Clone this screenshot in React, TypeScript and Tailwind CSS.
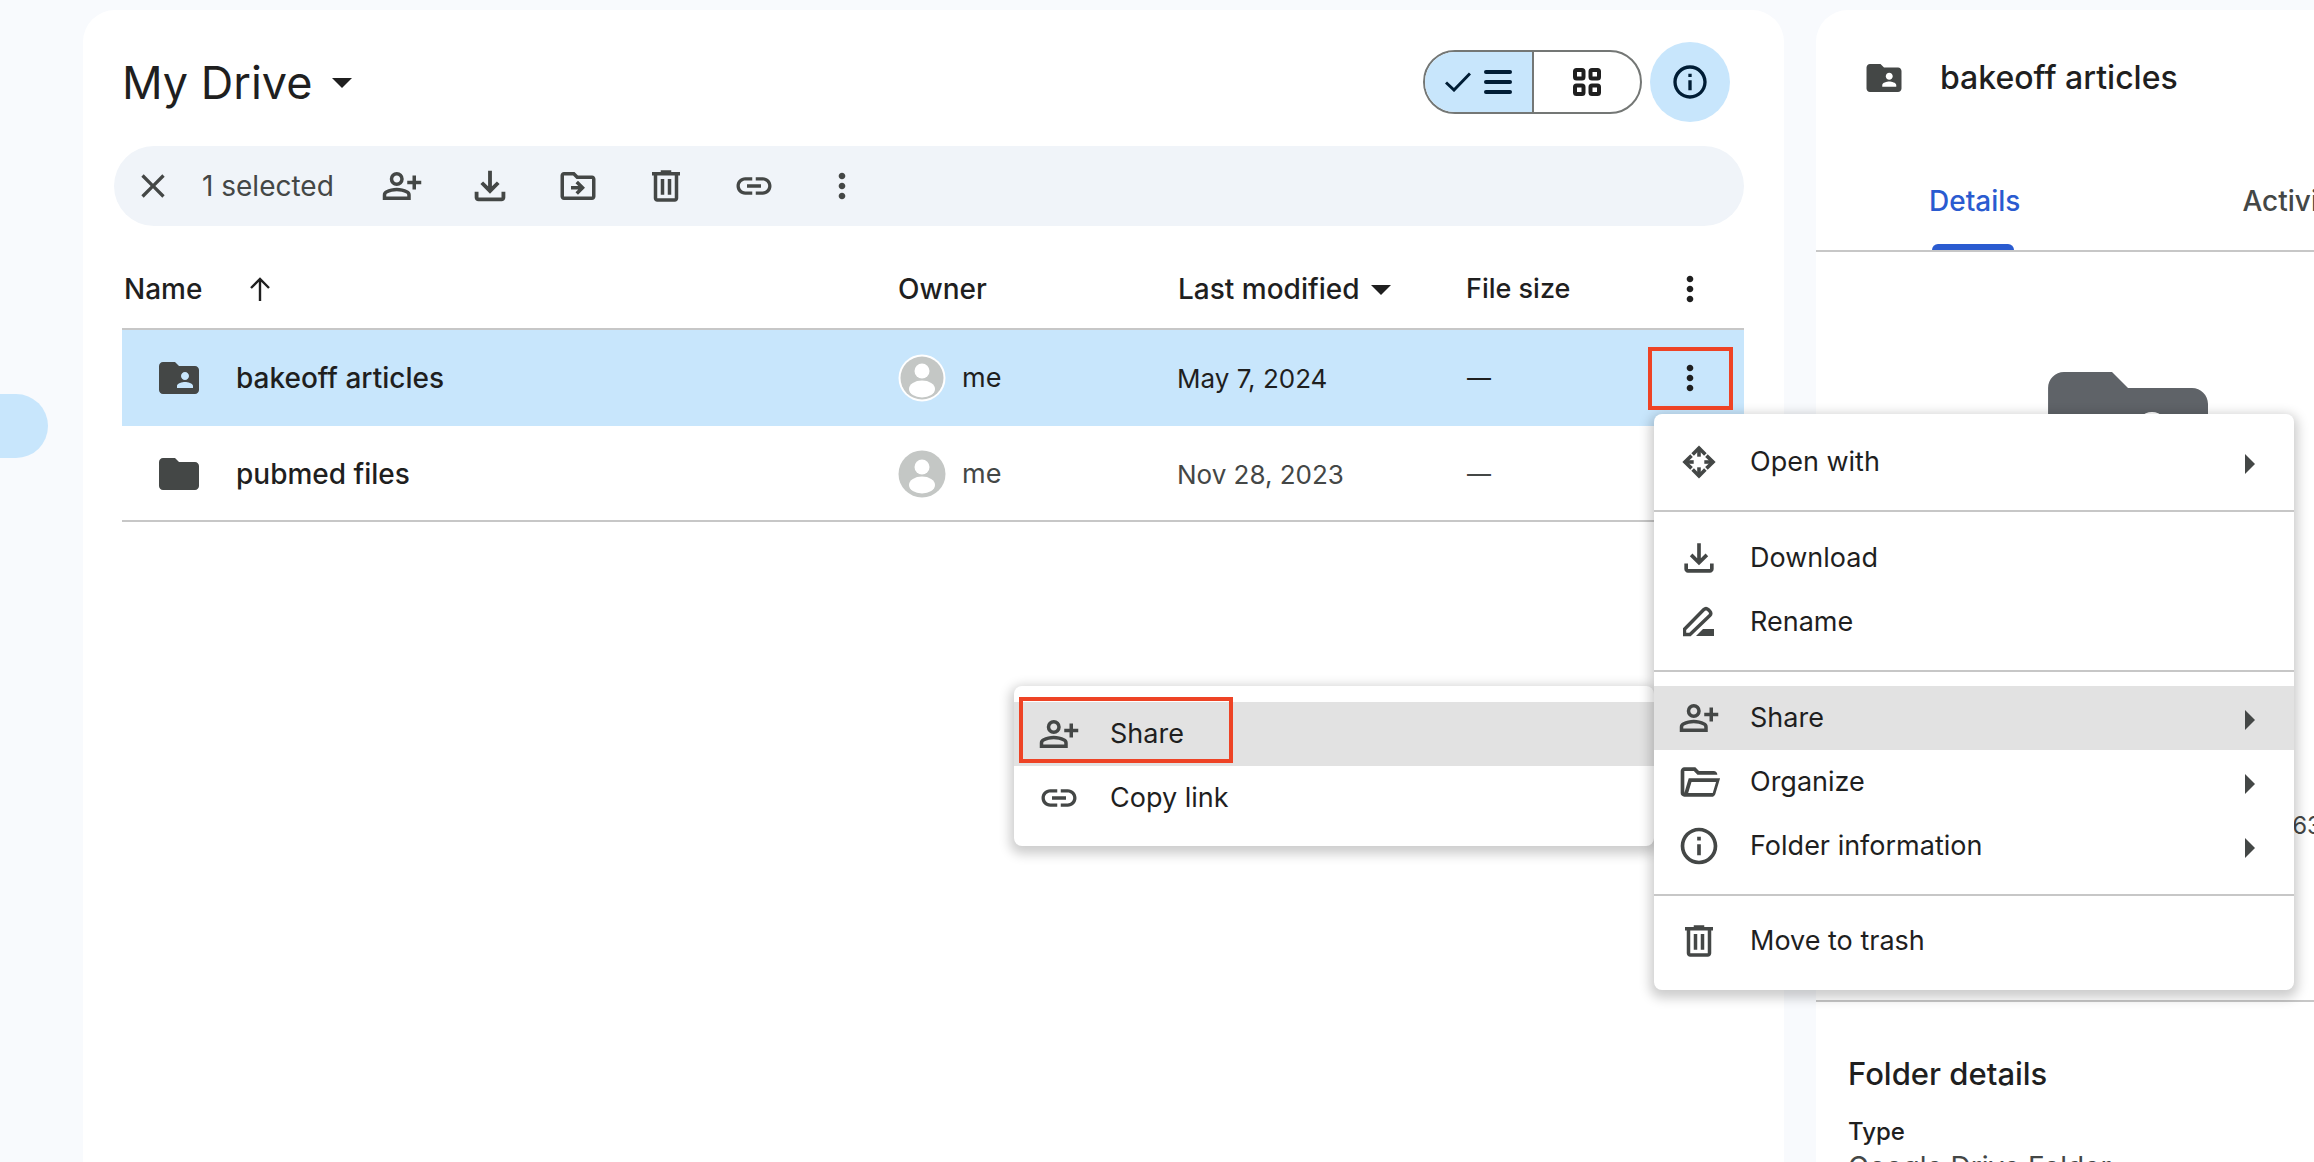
import type { ReactNode } from "react";
import { MdArrowDropDown, MdClose, MdFolder, MdFolderShared, MdInfoOutline, MdLink, MdMoreVert, MdOutlineDriveFileMove, MdOutlineFileDownload } from "react-icons/md";

const columns = "grid grid-cols-[776px_279px_289px_278px] items-center";

function Symbol({ d, size = 42 }: { d: string; size?: number }) {
  return (
    <svg viewBox="0 0 24 24" width={size} height={size} fill="currentColor" fillRule="evenodd">
      <path d={d} />
    </svg>
  );
}

const PersonAdd = () => (
  <Symbol d="M18 14v-3h-3V9h3V6h2v3h3v2h-3v3h-2Zm-9-2q-1.65 0-2.825-1.175T5 8q0-1.65 1.175-2.825T9 4q1.65 0 2.825 1.175T13 8q0 1.65-1.175 2.825T9 12Zm-8 8v-2.8q0-.85.438-1.562T2.6 14.55q1.55-.775 3.15-1.162T9 13q1.65 0 3.25.388t3.15 1.162q.725.375 1.163 1.088T17 17.2V20H1Zm2-2h12v-.8q0-.275-.138-.5t-.362-.35q-1.35-.675-2.725-1.012T9 15q-1.4 0-2.775.338T3.5 16.35q-.225.125-.363.35T3 17.2v.8Zm6-8q.825 0 1.413-.588T11 8q0-.825-.588-1.413T9 6q-.825 0-1.413.588T7 8q0 .825.588 1.413T9 10Z" />
);

const Trash = () => (
  <Symbol d="M7 21q-.825 0-1.413-.588T5 19V6H4V4h5V3h6v1h5v2h-1v13q0 .825-.588 1.413T17 21H7ZM17 6H7v13h10V6ZM9 17h2V8H9v9Zm4 0h2V8h-2v9Z" />
);

const FolderOpen = () => (
  <Symbol
    size={44}
    d="M4 20q-.825 0-1.413-.588T2 18V6q0-.825.588-1.413T4 4h6l2 2h8q.825 0 1.413.588T22 8H11.175l-2-2H4v12l2.4-8h17.1l-2.575 8.575q-.2.65-.738 1.037T19.5 20H4Zm2.1-2H19.5l1.8-6H7.9l-1.8 6Z"
  />
);

function OpenWith() {
  return (
    <svg viewBox="0 0 32 32" width={34} height={34} fill="none" stroke="currentColor" strokeWidth={3.4} strokeLinejoin="miter">
      {[0, 90, 180, 270].map((angle) => (
        <g key={angle} transform={`rotate(${angle} 16 16)`}>
          <path d="M16 2.5V11" />
          <path d="M10 9L16 2.8L22 9" />
        </g>
      ))}
    </svg>
  );
}

function RenamePencil() {
  return (
    <svg viewBox="0 0 32 32" width={32} height={32}>
      <path
        d="M1.5 28.5V23.2L20.8 3.6Q23 1.6 25.2 3.6L26.8 5.2Q28.8 7.4 26.8 9.5L7 28.5Z"
        fill="none"
        stroke="currentColor"
        strokeWidth={3.4}
      />
      <path d="M13 30L20 23H31V30Z" fill="currentColor" />
    </svg>
  );
}

function Avatar({ ring }: { ring?: boolean }) {
  return (
    <svg viewBox="0 0 48 48" className="h-[48px] w-[48px]">
      <circle cx="24" cy="24" r="23.5" fill={ring ? "#ffffff" : "#c4c7c5"} />
      <circle cx="24" cy="24" r="21.5" fill="#c4c7c5" />
      <circle cx="24" cy="17" r="7.5" fill="#ffffff" />
      <ellipse cx="24" cy="35" rx="13" ry="8.5" fill="#ffffff" />
    </svg>
  );
}

function FileRow({
  name,
  date,
  icon,
  selected,
}: {
  name: string;
  date: string;
  icon: ReactNode;
  selected?: boolean;
}) {
  return (
    <div className={`${columns} ${selected ? "h-[96px] bg-[#c8e6fc] text-[#1f1f1f]" : "h-[94px] pt-[2px] text-[#444746]"}`}>
      <div className="flex items-center">
        <span className="ml-[33px] flex w-[81px] text-[#444746]">{icon}</span>
        <span className="text-[28px] font-medium text-[#1f1f1f]">{name}</span>
      </div>
      <div className="flex items-center gap-[16px]">
        <Avatar ring={selected} />
        <span className="text-[27px]">me</span>
      </div>
      <span className="text-[26px]">{date}</span>
      <div className="flex items-center justify-between pr-[34px]">
        <span className="pl-[1px] text-[24px]">—</span>
        {selected && <MdMoreVert size={40} className="text-[#1f1f1f]" />}
      </div>
    </div>
  );
}

function MenuItem({ icon, label, hover, arrow }: { icon: ReactNode; label: string; hover?: boolean; arrow?: boolean }) {
  return (
    <div className={`flex h-[64px] items-center text-[#1f1f1f] ${hover ? "bg-[#e2e2e2]" : ""}`}>
      <span className="mr-[6px] flex w-[90px] justify-center text-[#444746]">{icon}</span>
      <span className="text-[27px]">{label}</span>
      {arrow && (
        <svg viewBox="0 0 10 20" className="ml-auto mr-[39px] mt-[4px] h-[20px] w-[10px] text-[#444746]">
          <path d="M0 0l10 10L0 20z" fill="currentColor" />
        </svg>
      )}
    </div>
  );
}

const toolbarIcons = [
  <PersonAdd key="share" />,
  <MdOutlineFileDownload key="download" size={46} />,
  <MdOutlineDriveFileMove key="move" size={42} />,
  <Trash key="trash" />,
  <MdLink key="link" size={42} />,
  <MdMoreVert key="more" size={40} />,
];

export default function App() {
  return (
    <div
      className="relative flex h-[1162px] w-[2314px] overflow-hidden bg-[#f8fafd] pt-[10px]"
      style={{ fontFamily: "Inter, 'Noto Sans', sans-serif" }}
    >
      {/* rail: only the active pill shows */}
      <div className="w-[83px] shrink-0 pt-[384px]">
        <div className="h-[64px] w-[48px] rounded-r-[32px] bg-[#c8e6fc]" />
      </div>

      {/* main panel */}
      <main className="h-[1200px] w-[1701px] shrink-0 rounded-t-[32px] bg-white pl-[39px] pr-[40px] pt-[32px]">
        <div className="flex h-[80px] items-center justify-between">
          <div className="flex items-center text-[#1f1f1f]">
            <h1 className="text-[45px] leading-none">My Drive</h1>
            <MdArrowDropDown size={48} className="ml-[6px] text-[#1f1f1f]" />
          </div>
          <div className="flex items-center gap-[8px] pr-[14px]">
            <div className="flex h-[64px] w-[219px] overflow-hidden rounded-full border-2 border-[#747775]">
              <div className="flex w-[109px] items-center border-r-2 border-[#747775] bg-[#c8e6fc] pl-[20px] text-[#001d35]">
                <svg viewBox="0 0 26 20" width={26} height={20} fill="none" stroke="currentColor" strokeWidth={3}>
                  <path d="M1 10.5L9 18L25 1.5" />
                </svg>
                <div className="ml-[13px] flex w-[28px] flex-col gap-[6px]">
                  <span className="h-[4px] rounded-full bg-[#001d35]" />
                  <span className="h-[4px] rounded-full bg-[#001d35]" />
                  <span className="h-[4px] rounded-full bg-[#001d35]" />
                </div>
              </div>
              <div className="flex flex-1 items-center justify-center text-[#1f1f1f]">
                <svg viewBox="0 0 28 28" width={28} height={28} fill="none" stroke="currentColor" strokeWidth={4}>
                  <rect x="2" y="2" width="8.5" height="8.5" rx="1.5" />
                  <rect x="17.5" y="2" width="8.5" height="8.5" rx="1.5" />
                  <rect x="2" y="17.5" width="8.5" height="8.5" rx="1.5" />
                  <rect x="17.5" y="17.5" width="8.5" height="8.5" rx="1.5" />
                </svg>
              </div>
            </div>
            <div className="flex h-[80px] w-[80px] items-center justify-center rounded-full bg-[#c8e6fc] text-[#001d35]">
              <MdInfoOutline size={40} />
            </div>
          </div>
        </div>

        <div className="mt-[24px] -ml-[8px] flex h-[80px] items-center rounded-full bg-[#f0f4f9] text-[#444746]">
          <span className="flex w-[78px] justify-center">
            <MdClose size={40} />
          </span>
          <span className="ml-[10px] w-[156px] text-[28px]">1 selected</span>
          {toolbarIcons.map((icon, i) => (
            <span key={i} className="flex w-[88px] justify-center">
              {icon}
            </span>
          ))}
        </div>

        <div className={`${columns} h-[104px] border-b-2 border-[#c7c7c7] pt-[24px] text-[28px] font-medium text-[#1f1f1f]`}>
          <div className="flex items-center pl-[2px]">
            <span className="w-[114px]">Name</span>
            <svg viewBox="0 0 24 24" width={24} height={26} fill="none" stroke="currentColor" strokeWidth={2.4} className="ml-[10px]">
              <path d="M12 24V2M3 11L12 2L21 11" />
            </svg>
          </div>
          <span>Owner</span>
          <div className="flex items-center">
            <span className="pl-[1px]">Last modified</span>
            <MdArrowDropDown size={48} className="-ml-[2px]" />
          </div>
          <div className="flex items-center justify-between pr-[34px]">
            <span className="text-[27px]">File size</span>
            <MdMoreVert size={40} />
          </div>
        </div>

        <FileRow name="bakeoff articles" date="May 7, 2024" selected icon={<MdFolderShared size={48} />} />
        <div className="border-b-2 border-[#c7c7c7]">
          <FileRow name="pubmed files" date="Nov 28, 2023" icon={<MdFolder size={48} />} />
        </div>
      </main>

      {/* details panel */}
      <aside className="ml-[32px] h-[1200px] w-[600px] shrink-0 overflow-hidden rounded-t-[32px] bg-white">
        <div className="flex h-[136px] items-center pl-[47px]">
          <MdFolderShared size={42} className="text-[#444746]" />
          <span className="ml-[35px] text-[32px] font-medium text-[#1f1f1f]">bakeoff articles</span>
        </div>
        <div className="relative flex h-[106px] border-b-2 border-[#c7c7c7] pl-[113px] pt-[34px] text-[28px] font-medium">
          <span className="text-[#2a5bd0]">Details</span>
          <span className="ml-[222px] text-[#444746]">Activity</span>
          <span className="absolute bottom-0 left-[116px] h-[6px] w-[82px] rounded-t-[6px] bg-[#2a5bd0]" />
        </div>
        <div className="h-[750px] border-b-2 border-[#c7c7c7] pt-[88px]">
          <MdFolderShared size={192} className="ml-[216px] text-[#5f6368]" />
          <p className="ml-[463px] mt-[276px] text-[24px] text-[#444746]">763</p>
        </div>
        <div className="pl-[32px]">
          <h2 className="mt-[50px] text-[31px] font-medium leading-[44px] text-[#1f1f1f]">Folder details</h2>
          <p className="mt-[19px] text-[24px] font-medium leading-[34px] text-[#1f1f1f]">Type</p>
          <p className="text-[28px] leading-[36px] text-[#444746]">Google Drive Folder</p>
        </div>
      </aside>

      {/* context submenu */}
      <div className="absolute left-[1014px] top-[686px] h-[160px] w-[640px] rounded-[8px] bg-white pt-[16px] shadow-[0_4px_12px_4px_rgba(0,0,0,0.2)]">
        <MenuItem icon={<PersonAdd />} label="Share" hover />
        <MenuItem icon={<MdLink size={42} />} label="Copy link" />
      </div>

      {/* context menu */}
      <div className="absolute left-[1654px] top-[414px] h-[576px] w-[640px] rounded-[8px] bg-white pt-[16px] shadow-[0_4px_12px_4px_rgba(0,0,0,0.2)]">
        <MenuItem icon={<OpenWith />} label="Open with" arrow />
        <div className="mb-[14px] mt-[16px] h-[2px] bg-[#c7c7c7]" />
        <MenuItem icon={<MdOutlineFileDownload size={44} />} label="Download" />
        <MenuItem icon={<RenamePencil />} label="Rename" />
        <div className="mb-[14px] mt-[16px] h-[2px] bg-[#c7c7c7]" />
        <MenuItem icon={<PersonAdd />} label="Share" hover arrow />
        <MenuItem icon={<FolderOpen />} label="Organize" arrow />
        <MenuItem icon={<MdInfoOutline size={44} />} label="Folder information" arrow />
        <div className="mb-[13px] mt-[16px] h-[2px] bg-[#c7c7c7]" />
        <MenuItem icon={<Trash />} label="Move to trash" />
      </div>

      {/* annotation boxes */}
      <div className="absolute left-[1648px] top-[347px] h-[63px] w-[85px] border-[4px] border-[#ee4325]" />
      <div className="absolute left-[1019px] top-[697px] h-[66px] w-[214px] border-[4px] border-[#ee4325]" />
    </div>
  );
}
